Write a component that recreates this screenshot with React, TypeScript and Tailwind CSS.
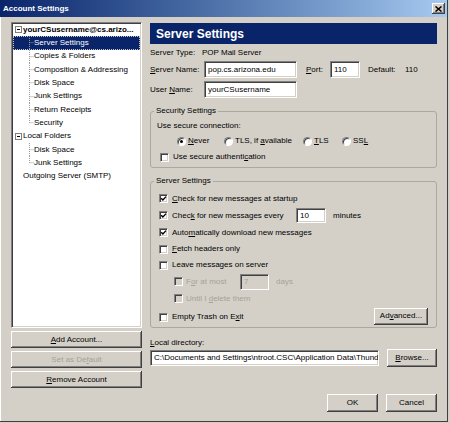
import type { ReactNode } from "react";

const raised =
  "bg-[#d4d0c8] shadow-[inset_-1px_-1px_0_#404040,inset_1px_1px_0_#fff,inset_-2px_-2px_0_#808080]";
const sunken =
  "border border-t-[#808080] border-l-[#808080] border-b-white border-r-white shadow-[inset_1px_1px_0_#404040,inset_-1px_-1px_0_#d4d0c8]";

function Check({ checked, disabled }: { checked?: boolean; disabled?: boolean }) {
  return (
    <span
      className={`flex h-[9px] w-[9px] shrink-0 items-center justify-center ${sunken} ${
        disabled ? "bg-[#d4d0c8]" : "bg-white"
      }`}
    >
      {checked && (
        <svg width="7" height="7" viewBox="0 0 7 7">
          <path d="M1.2 3.2 L2.9 5 L6 1.6" fill="none" stroke="#000" strokeWidth="1.4" />
        </svg>
      )}
    </span>
  );
}

function Radio({ on }: { on?: boolean }) {
  return (
    <span className="flex h-[9px] w-[9px] shrink-0 items-center justify-center rounded-full border border-t-[#808080] border-l-[#808080] border-b-white border-r-white bg-white shadow-[inset_1px_1px_0_#404040]">
      {on && <span className="h-[3px] w-[3px] rounded-full bg-black" />}
    </span>
  );
}

function CheckRow({
  checked,
  disabled,
  className = "",
  children,
}: {
  checked?: boolean;
  disabled?: boolean;
  className?: string;
  children: ReactNode;
}) {
  return (
    <div className={`flex items-center gap-[4px] ${className}`}>
      <Check checked={checked} disabled={disabled} />
      <span className={disabled ? "text-[#a5a29b]" : ""}>{children}</span>
    </div>
  );
}

function Btn({ className = "", disabled, children }: { className?: string; disabled?: boolean; children: ReactNode }) {
  return (
    <button
      className={`flex shrink-0 items-center justify-center ${raised} ${disabled ? "text-[#a5a29b]" : ""} ${className}`}
    >
      {children}
    </button>
  );
}

function Connector({ last }: { last?: boolean }) {
  return (
    <svg width="5" height="13.33" viewBox="0 0 5 13.33" className="shrink-0">
      <line x1="0.5" y1="0" x2="0.5" y2={last ? 6.7 : 13.33} stroke="#9a9a9a" strokeDasharray="1 1" />
      <line x1="0.5" y1="6.7" x2="5" y2="6.7" stroke="#9a9a9a" strokeDasharray="1 1" />
    </svg>
  );
}

function Expander() {
  return (
    <span className="ml-[2px] flex h-[7px] w-[7px] shrink-0 items-center justify-center border border-[#808080] bg-white">
      <span className="h-px w-[3px] bg-black" />
    </span>
  );
}

function Child({ label, last, selected }: { label: string; last?: boolean; selected?: boolean }) {
  return (
    <div
      className={`flex h-[13.33px] items-center ${
        selected ? "border border-dotted border-[#c8c8c8] bg-[#0a246a] text-white" : ""
      }`}
    >
      <span className={selected ? "w-[15px] shrink-0" : "w-[16px] shrink-0"} />
      <Connector last={last} />
      <span>{label}</span>
    </div>
  );
}

function Tree() {
  return (
    <div className={`h-[306px] w-[131px] bg-white px-px ${sunken}`}>
      <div className="flex h-[13.33px] items-center gap-[1px]">
        <Expander />
        <span className="font-bold">yourCSusername@cs.arizo...</span>
      </div>
      <Child label="Server Settings" selected />
      <Child label="Copies & Folders" />
      <Child label="Composition & Addressing" />
      <Child label="Disk Space" />
      <Child label="Junk Settings" />
      <Child label="Return Receipts" />
      <Child label="Security" last />
      <div className="flex h-[13.33px] items-center gap-[1px]">
        <Expander />
        <span>Local Folders</span>
      </div>
      <Child label="Disk Space" />
      <Child label="Junk Settings" last />
      <div className="flex h-[13.33px] items-center pl-[10px]">Outgoing Server (SMTP)</div>
    </div>
  );
}

function Group({ title, className = "", children }: { title: string; className?: string; children: ReactNode }) {
  return (
    <div className={`relative rounded-[3px] border border-[#aba89f] ${className}`}>
      <span className="absolute -top-[6px] left-[3px] bg-[#d4d0c8] px-[2px]">{title}</span>
      {children}
    </div>
  );
}

function TextBox({ value, className = "", disabled }: { value: string; className?: string; disabled?: boolean }) {
  return (
    <div
      className={`flex shrink-0 items-center overflow-hidden whitespace-nowrap pl-[3px] ${sunken} ${
        disabled ? "bg-[#d4d0c8] text-[#a5a29b]" : "bg-white"
      } ${className}`}
    >
      {value}
    </div>
  );
}

export default function App() {
  return (
    <div className="h-[423px] w-[450px] overflow-hidden bg-[#d4d0c8] font-['Liberation_Sans',Arial,sans-serif] text-[8px] leading-[10px] text-black">
      <div className="flex h-[422px] w-[448px] flex-col border-b border-r border-[#404040] shadow-[inset_1px_1px_0_#fff]">
        {/* title bar */}
        <div className="flex h-[17px] shrink-0 items-center justify-between bg-gradient-to-r from-[#0a246a] to-[#a6caf0] pl-[3px] pr-[2px]">
          <span className="font-bold text-white">Account Settings</span>
          <span className={`flex h-[11px] w-[13px] items-center justify-center ${raised}`}>
            <svg width="7" height="6" viewBox="0 0 7 6">
              <path d="M0.5 0.5 L6.5 5.5 M6.5 0.5 L0.5 5.5" stroke="#000" strokeWidth="1.5" />
            </svg>
          </span>
        </div>

        <div className="flex gap-[8px] pl-[11px] pt-[5px]">
          {/* left column */}
          <div className="flex w-[131px] flex-col">
            <Tree />
            <Btn className="mt-[3px] h-[17px]">
              <span>
                <u>A</u>dd Account...
              </span>
            </Btn>
            <Btn disabled className="mt-[3px] h-[17px]">
              <span>
                Set as De<u>f</u>ault
              </span>
            </Btn>
            <Btn className="mt-[3px] h-[17px]">
              <span>
                <u>R</u>emove Account
              </span>
            </Btn>
          </div>

          {/* right column */}
          <div className="flex w-[287px] flex-col">
            <div className="mt-px flex h-[21px] items-center bg-[#0a246a] pl-[6px] text-[12px] font-bold text-white">
              Server Settings
            </div>

            <div className="mt-[3px] flex h-[12px] items-center">
              <span className="w-[52px]">Server Type:</span>
              <span>POP Mail Server</span>
            </div>

            <div className="mt-[2px] flex h-[17px] items-center">
              <span className="w-[54px]">
                <u>S</u>erver Name:
              </span>
              <TextBox value="pop.cs.arizona.edu" className="h-[17px] w-[93px]" />
              <span className="ml-[9px] w-[24px]">
                <u>P</u>ort:
              </span>
              <TextBox value="110" className="h-[17px] w-[30px]" />
              <span className="ml-[8px] w-[37px]">Default:</span>
              <span>110</span>
            </div>

            <div className="mt-[3px] flex h-[17px] items-center">
              <span className="w-[54px]">
                User <u>N</u>ame:
              </span>
              <TextBox value="yourCSusername" className="h-[17px] w-[93px]" />
            </div>

            <Group title="Security Settings" className="mt-[13px] h-[57px] pl-[6px] pt-[8px]">
              <div className="flex h-[12px] items-center">Use secure connection:</div>
              <div className="ml-[20px] mt-px flex h-[16px] items-center">
                <div className="flex w-[47px] items-center gap-[2px]">
                  <Radio on />
                  <span>
                    <u>N</u>ever
                  </span>
                </div>
                <div className="flex w-[79px] items-center gap-[2px]">
                  <Radio />
                  <span>
                    TLS, if <u>a</u>vailable
                  </span>
                </div>
                <div className="flex w-[39px] items-center gap-[2px]">
                  <Radio />
                  <span>
                    <u>T</u>LS
                  </span>
                </div>
                <div className="flex items-center gap-[2px]">
                  <Radio />
                  <span>
                    SS<u>L</u>
                  </span>
                </div>
              </div>
              <CheckRow className="ml-[3px] h-[16px]">
                Use secure authenti<u>c</u>ation
              </CheckRow>
            </Group>

            <Group title="Server Settings" className="mt-[13px] h-[147px] pl-[8px] pr-[8px] pt-[8px]">
              <CheckRow checked className="h-[17px]">
                <u>C</u>heck for new messages at startup
              </CheckRow>
              <div className="flex h-[17px] items-center gap-[4px]">
                <Check checked />
                <span className="w-[120px]">
                  Chec<u>k</u> for new messages every
                </span>
                <TextBox value="10" className="h-[15px] w-[30px]" />
                <span className="ml-[3px]">minutes</span>
              </div>
              <CheckRow checked className="h-[17px]">
                Auto<u>m</u>atically download new messages
              </CheckRow>
              <CheckRow className="h-[16px]">
                <u>F</u>etch headers only
              </CheckRow>
              <CheckRow className="h-[16px]">Leave messages on server</CheckRow>
              <div className="ml-[15px] flex h-[17px] items-center gap-[3px]">
                <Check disabled />
                <span className="w-[51px] text-[#a5a29b]">
                  F<u>o</u>r at most
                </span>
                <TextBox value="7" disabled className="h-[16px] w-[29px]" />
                <span className="ml-[4px] text-[#a5a29b]">days</span>
              </div>
              <CheckRow disabled className="ml-[15px] h-[17px] !gap-[3px]">
                Until I <u>d</u>elete them
              </CheckRow>
              <div className="flex h-[18px] items-center justify-between">
                <CheckRow className="mt-[2px]">
                  Empty Trash on E<u>x</u>it
                </CheckRow>
                <Btn className="h-[17px] w-[54px]">
                  <span>
                    Ad<u>v</u>anced...
                  </span>
                </Btn>
              </div>
            </Group>

            <div className="mt-[9px] flex h-[12px] items-center">
              <span>
                <u>L</u>ocal directory:
              </span>
            </div>
            <div className="flex h-[18px] items-center">
              <TextBox
                value="C:\Documents and Settings\ntroot.CSC\Application Data\Thund"
                className="h-[16px] w-[229px]"
              />
              <Btn className="ml-[8px] h-[18px] w-[50px]">
                <span>
                  <u>B</u>rowse...
                </span>
              </Btn>
            </div>

            <div className="mt-[27px] flex h-[18px] justify-end gap-[8px]">
              <Btn className="h-[18px] w-[51px]">OK</Btn>
              <Btn className="h-[18px] w-[51px]">Cancel</Btn>
            </div>
          </div>
        </div>
      </div>
    </div>
  );
}
